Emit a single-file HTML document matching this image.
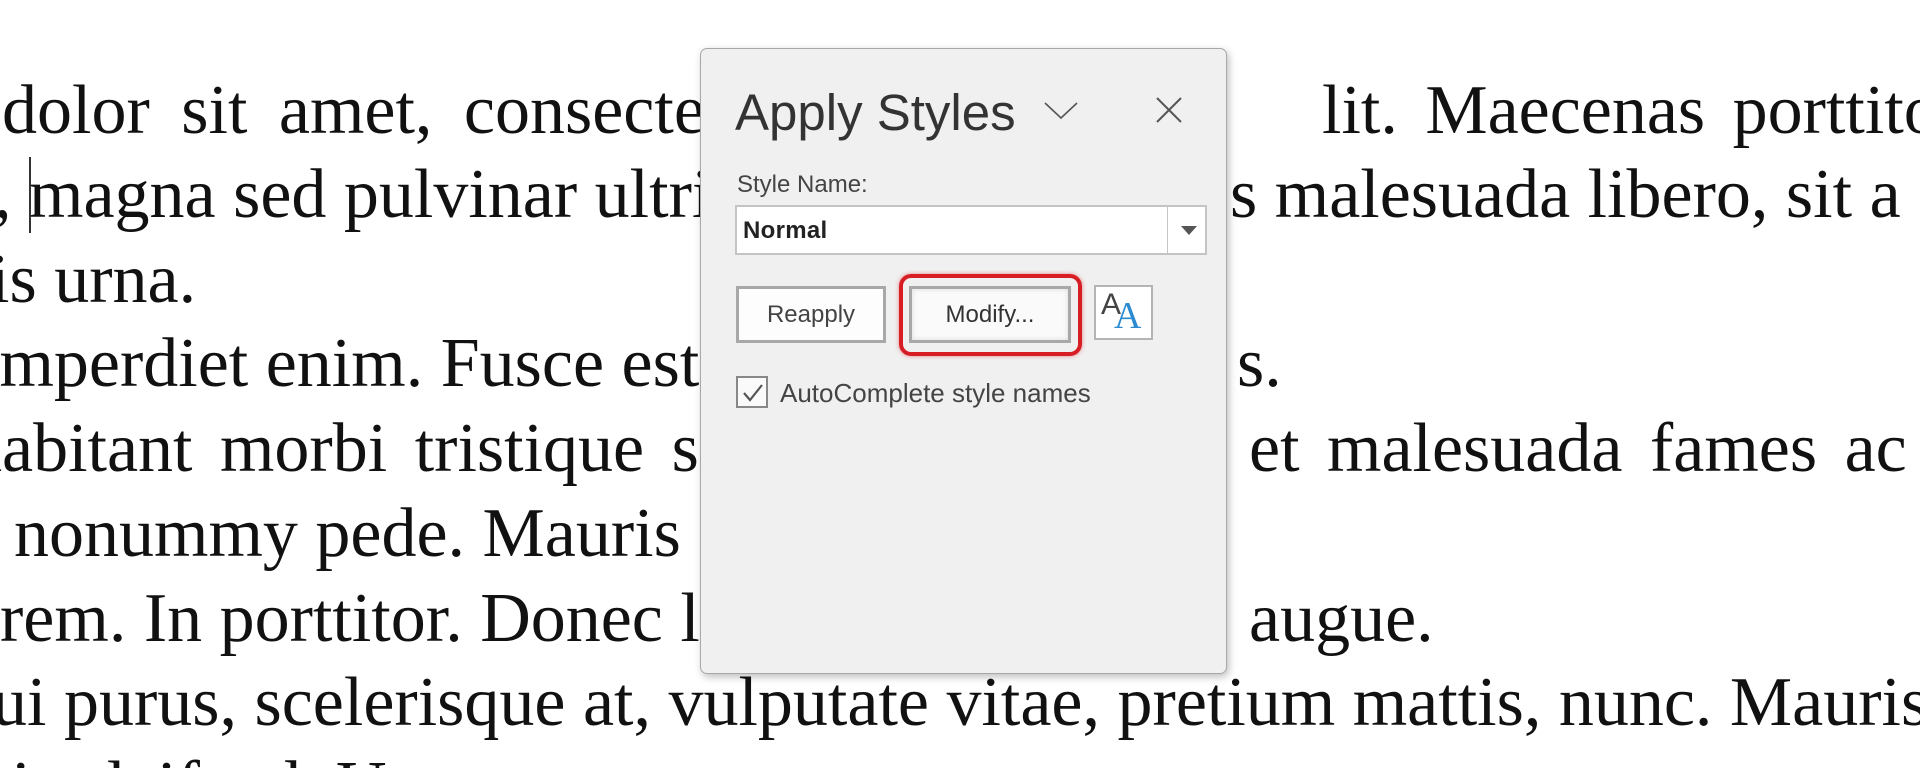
<!DOCTYPE html>
<html><head><meta charset="utf-8"><style>
html,body{margin:0;padding:0;width:1920px;height:768px;overflow:hidden;background:#fff;}
#w{position:relative;width:1920px;height:768px;overflow:hidden;}
.t{position:absolute;white-space:nowrap;font-family:"Liberation Serif",serif;font-size:70px;color:#111;line-height:1;}
.p{position:absolute;left:700px;top:48px;width:525px;height:624px;background:#f0f0f0;border:1px solid #a8a8a8;border-radius:7px;box-shadow:2px 3px 8px rgba(0,0,0,.25);font-family:"Liberation Sans",sans-serif;}
.a{position:absolute;}
.btn{position:absolute;background:#fdfdfd;border:3px solid #a8a8a8;box-sizing:border-box;font-size:24px;color:#444;text-align:center;}
</style></head><body><div id="w">
<div class="t" style="left:2px;top:76px;word-spacing:14px">dolor sit amet, consectetuer</div>
<div class="t" style="left:1322px;top:76px;word-spacing:10px">lit. Maecenas porttitor c</div>
<div class="t" style="left:-6px;top:160px">, magna sed pulvinar ultrices</div>
<div style="position:absolute;left:29px;top:157px;width:2px;height:76px;background:#333"></div>
<div class="t" style="left:1230px;top:160px">s malesuada libero, sit a</div>
<div class="t" style="left:-10px;top:245px">is urna.</div>
<div class="t" style="left:-20px;top:329px">imperdiet enim. Fusce est</div>
<div class="t" style="left:1237px;top:329px">s.</div>
<div class="t" style="left:-33px;top:414px;word-spacing:10px">habitant morbi tristique senectus</div>
<div class="t" style="left:1249px;top:414px;word-spacing:10px">et malesuada fames ac t</div>
<div class="t" style="left:14px;top:499px">nonummy pede. Mauris</div>
<div class="t" style="left:0px;top:584px">rem. In porttitor. Donec laoreet</div>
<div class="t" style="left:1249px;top:584px">augue.</div>
<div class="t" style="left:-8px;top:668px">ui purus, scelerisque at, vulputate vitae, pretium mattis, nunc. Mauris</div>
<div class="t" style="left:-8px;top:752px">tis eleifend. Ut</div>

<div class="p">
<div class="a" style="left:34px;top:34px;font-size:51px;color:#333">Apply Styles</div>
<svg class="a" style="left:342px;top:50px" width="36" height="24"><path d="M2 4 L18 19 L34 4" fill="none" stroke="#555" stroke-width="1.6"/></svg>
<svg class="a" style="left:453px;top:46px" width="30" height="30"><path d="M3 3 L27 27 M27 3 L3 27" fill="none" stroke="#555" stroke-width="2"/></svg>
<div class="a" style="left:36px;top:122px;font-size:24px;color:#444">Style Name:</div>
<div class="a" style="left:34px;top:156px;width:472px;height:50px;background:#fff;border:2px solid #c4c4c4;box-sizing:border-box">
 <div class="a" style="left:6px;top:10px;font-size:24px;color:#222;font-weight:bold;letter-spacing:.3px">Normal</div>
 <div class="a" style="left:430px;top:0;width:1px;height:46px;background:#c4c4c4"></div>
 <svg class="a" style="left:444px;top:19px" width="16" height="10"><path d="M0 0 L16 0 L8 9 Z" fill="#555"/></svg>
</div>
<div class="btn" style="left:35px;top:237px;width:150px;height:57px;line-height:51px">Reapply</div>
<div class="a" style="left:198px;top:225px;width:183px;height:82px;border:4px solid #d81e25;border-radius:12px;box-sizing:border-box;box-shadow:0 0 4px rgba(216,30,37,.5)"></div>
<div class="btn" style="left:208px;top:237px;width:162px;height:57px;line-height:51px;background:#fafafa;color:#333;box-shadow:inset 0 0 6px rgba(0,0,0,.12)">Modify...</div>
<div class="a" style="left:393px;top:236px;width:59px;height:55px;background:#fff;border:2px solid #b4b4b4;box-sizing:border-box">
 <div class="a" style="left:5px;top:1px;font-size:30px;color:#444">A</div>
 <div class="a" style="left:18px;top:10px;font-size:38px;line-height:38px;color:#2b8ad0;font-family:'Liberation Serif',serif">A</div>
</div>
<div class="a" style="left:35px;top:327px;width:32px;height:32px;border:2px solid #888;box-sizing:border-box;background:#fafafa">
 <svg class="a" style="left:3px;top:3px" width="24" height="24"><path d="M3 12 L9 19 L21 4" fill="none" stroke="#555" stroke-width="2.2"/></svg>
</div>
<div class="a" style="left:79px;top:329px;font-size:26px;color:#444">AutoComplete style names</div>
</div>
</div></body></html>
